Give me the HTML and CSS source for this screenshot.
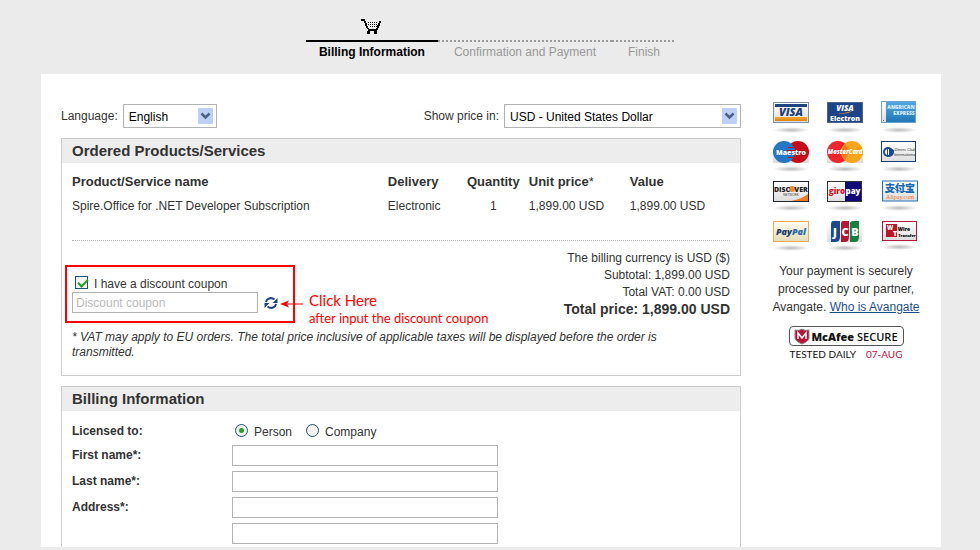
FILE: index.html
```html
<!DOCTYPE html>
<html lang="en">
<head>
    <meta charset="UTF-8">
    <meta name="viewport" content="width=device-width, initial-scale=1.0">
    <title>Billing Information</title>
    <link rel="stylesheet" href="styles.css">
</head>
<body>
    <!-- Checkout Steps -->
    <ol class="steps">
        <li class="step active">
            <svg class="cart" viewBox="0 0 21 16" shape-rendering="crispEdges">
                <path d="M0 0h4v2h-4zM3 2h2v2h-2zM4 4h2v3h-2zM5 7h2v2h-2zM6 9h2v1h-2zM7 10h9v2h-9zM15 9h2v2h-2zM16 6h2v3h-2zM17 4h2v3h-2zM18 2h2v2h-2zM6 12h3v3h-3zM13 12h3v3h-3z"/>
                <path d="M7 3h1v1h-1zM9 3h1v1h-1zM11 3h1v1h-1zM13 3h1v1h-1zM15 3h1v1h-1zM7 5h1v1h-1zM9 5h1v1h-1zM11 5h1v1h-1zM13 5h1v1h-1zM15 5h1v1h-1zM9 7h1v1h-1zM11 7h1v1h-1zM13 7h1v1h-1zM15 7h1v1h-1z"/>
            </svg>
            <span>Billing Information</span>
        </li>
        <li class="step"><span>Confirmation and Payment</span></li>
        <li class="step"><span>Finish</span></li>
    </ol>

    <div class="page">
        <main class="main">
            <div class="toolbar">
                <div class="picker">
                    <label for="language">Language:</label>
                    <div class="select language">
                        <select id="language"><option>English</option></select>
                        <svg viewBox="0 0 15 16"><rect width="15" height="16" rx="1" fill="#bcd0fa"/><path d="M3.500 5.500l4 4 4-4" fill="none" stroke="#4a6185" stroke-width="2.500"/></svg>
                    </div>
                </div>
                <div class="picker">
                    <label for="currency">Show price in:</label>
                    <div class="select currency">
                        <select id="currency"><option>USD - United States Dollar</option></select>
                        <svg viewBox="0 0 15 16"><rect width="15" height="16" rx="1" fill="#bcd0fa"/><path d="M3.500 5.500l4 4 4-4" fill="none" stroke="#4a6185" stroke-width="2.500"/></svg>
                    </div>
                </div>
            </div>

            <!-- Order -->
            <section class="panel">
                <h2>Ordered Products/Services</h2>
                <div class="panel-body">
                    <table class="products">
                        <thead>
                            <tr>
                                <th class="col-name">Product/Service name</th>
                                <th class="col-delivery">Delivery</th>
                                <th class="col-quantity">Quantity</th>
                                <th class="col-price">Unit price<span class="star">*</span></th>
                                <th>Value</th>
                            </tr>
                        </thead>
                        <tbody>
                            <tr>
                                <td>Spire.Office for .NET Developer Subscription</td>
                                <td>Electronic</td>
                                <td class="col-quantity">1</td>
                                <td>1,899.00 USD</td>
                                <td>1,899.00 USD</td>
                            </tr>
                        </tbody>
                    </table>

                    <div class="summary">
                        <div class="coupon">
                            <label class="coupon-check"><input type="checkbox" checked> I have a discount coupon</label>
                            <div class="coupon-row">
                                <input class="field" type="text" placeholder="Discount coupon" aria-label="Discount coupon">
                                <button class="refresh" type="button" aria-label="Refresh">
                                    <svg viewBox="0 0 14 14"><g fill="none" stroke="#1d4580" stroke-width="2"><path d="M2 6c.5-3 4.500-5.500 8.500-2.500"/><path d="M12 8c-.5 3-4.500 5.500-8.500 2.500"/></g><path fill="#1d4580" d="M13.500 2v5H8.500zM.5 12V7H5.500z"/></svg>
                                </button>
                            </div>
                            <div class="callout-box"></div>
                            <div class="callout">
                                <svg class="arrow" viewBox="0 0 23 8"><path d="M6 4h17" stroke="#f00"/><path d="M0 4l9-3.500L7 4l2 3.500z" fill="#f00"/></svg>
                                <p><span class="callout-title">Click Here</span><br>after input the discount coupon</p>
                            </div>
                        </div>
                        <div class="totals">
                            <p>The billing currency is USD ($)</p>
                            <p>Subtotal: 1,899.00 USD</p>
                            <p>Total VAT: 0.00 USD</p>
                            <p class="total">Total price: 1,899.00 USD</p>
                        </div>
                    </div>

                    <p class="note">* VAT may apply to EU orders. The total price inclusive of applicable taxes will be displayed before the order is transmitted.</p>
                </div>
            </section>

            <!-- Billing Form -->
            <section class="panel billing">
                <h2>Billing Information</h2>
                <form class="form">
                    <div class="row licensed">
                        <span class="row-label">Licensed to:</span>
                        <div class="radios">
                            <label><input type="radio" name="licensed" checked><span>Person</span></label>
                            <label><input type="radio" name="licensed"><span>Company</span></label>
                        </div>
                    </div>
                    <div class="row">
                        <label class="row-label" for="first">First name*:</label>
                        <input class="field" id="first" type="text">
                    </div>
                    <div class="row">
                        <label class="row-label" for="last">Last name*:</label>
                        <input class="field" id="last" type="text">
                    </div>
                    <div class="row">
                        <label class="row-label" for="address">Address*:</label>
                        <input class="field" id="address" type="text">
                    </div>
                    <div class="row">
                        <span class="row-label"></span>
                        <input class="field" type="text" aria-label="Address line 2">
                    </div>
                </form>
            </section>
        </main>

        <!-- Payment Methods -->
        <aside class="side">
            <svg class="defs" width="0" height="0">
                <defs>
                    <radialGradient id="shade"><stop offset="0" stop-color="#bbb"/><stop offset="1" stop-color="#fff"/></radialGradient>
                    <linearGradient id="paper" x2="0" y2="1"><stop offset="0" stop-color="#fff"/><stop offset="1" stop-color="#ddd"/></linearGradient>
                    <linearGradient id="orange" x2="0" y2="1"><stop offset="0" stop-color="#f6a935"/><stop offset="1" stop-color="#dd8410"/></linearGradient>
                    <linearGradient id="sky" x2="0" y2="1"><stop offset="0" stop-color="#54a8e0"/><stop offset="1" stop-color="#2075b5"/></linearGradient>
                    <linearGradient id="cream" x2="0" y2="1"><stop offset="0" stop-color="#fffdf2"/><stop offset="1" stop-color="#e4dcb8"/></linearGradient>
                </defs>
            </svg>
            <div class="cards">
                <svg viewBox="0 0 38 39">
                    <ellipse cx="18" cy="28" rx="18" ry="3" fill="url(#shade)"/>
                    <rect x=".5" y=".5" width="35" height="20" fill="url(#paper)" stroke="#7e8ea5"/>
                    <path fill="#1e4482" d="M2 2h32v3H2z"/><path fill="url(#orange)" d="M2 15h32v4H2z"/>
                    <text class="logo italic" x="18" y="14" font-size="11" fill="#1b3f80">VISA</text>
                </svg>
                <svg viewBox="0 0 38 39">
                    <ellipse cx="18" cy="28" rx="18" ry="3" fill="url(#shade)"/>
                    <rect x=".5" y=".5" width="35" height="20" fill="#1d4488" stroke="#4b6595"/>
                    <path fill="#eb9d25" d="M10 12q9-1 15-3-3 3-15 3z"/>
                    <text class="logo italic" x="18" y="9" font-size="8" fill="#fff">VISA</text>
                    <text class="logo" x="18" y="19" font-size="7" fill="#fff">Electron</text>
                </svg>
                <svg viewBox="0 0 38 39">
                    <ellipse cx="18" cy="28" rx="18" ry="3" fill="url(#shade)"/>
                    <rect x=".5" y="-.5" width="34" height="21" fill="url(#sky)" stroke="#6fa5cc"/>
                    <path fill="url(#paper)" d="M1 0h4v20H1z"/><path fill="#3a6f98" d="M2 18h1v1H2z"/>
                    <text class="logo outline" x="20" y="7" font-size="5">AMERICAN</text>
                    <text class="logo outline" x="23" y="13" font-size="5">EXPRESS</text>
                </svg>
                <svg viewBox="0 0 38 39">
                    <ellipse cx="18" cy="28" rx="18" ry="3" fill="url(#shade)"/>
                    <path fill="url(#paper)" d="M0 0h36v22H0z"/>
                    <circle cx="25" cy="11" r="11" fill="#c40d19"/><circle cx="11" cy="11" r="11" fill="#2377c4"/>
                    <path fill="#c40d19" d="M15 6h6v1h-6zM14 9h8v1h-8zM14 13h8v1h-8zM15 16h6v1h-6z"/>
                    <text class="logo" x="18" y="14" font-size="7" fill="#fff">Maestro</text>
                </svg>
                <svg viewBox="0 0 38 39">
                    <ellipse cx="18" cy="28" rx="18" ry="3" fill="url(#shade)"/>
                    <path fill="url(#paper)" d="M0 0h36v22H0z"/>
                    <circle cx="11" cy="11" r="11" fill="#f0242b"/><circle cx="25" cy="11" r="11" fill="#f8a51b"/>
                    <path fill="#f07a20" d="M18 3q6 8 0 16-6-8 0-16z"/>
                    <text class="logo italic" x="18" y="13" font-size="6" fill="#fff">MasterCard</text>
                </svg>
                <svg viewBox="0 0 38 39">
                    <ellipse cx="18" cy="28" rx="18" ry="3" fill="url(#shade)"/>
                    <rect x=".5" y=".5" width="34" height="20" fill="url(#paper)" stroke="#1d3f86"/>
                    <circle cx="7" cy="11" r="5" fill="#174990"/><circle cx="7" cy="11" r="3" fill="#fff"/><path fill="#174990" d="M6 8h1v6H6zM8 7q6 1 5 4 0 4-5 5z"/>
                    <text class="small-logo italic" x="24" y="10" font-size="4">Diners Club</text>
                    <text class="small-logo italic" x="24" y="15" font-size="4">International</text>
                </svg>
                <svg viewBox="0 0 38 39">
                    <ellipse cx="18" cy="28" rx="18" ry="3" fill="url(#shade)"/>
                    <rect x=".5" y="1.500" width="35" height="20" fill="url(#paper)" stroke="#1f252b"/>
                    <path fill="#f07b21" d="M35 14v7H18q11-2 17-7z"/><circle cx="19" cy="9" r="3" fill="#f5862a"/>
                    <text class="logo" x="9" y="12" font-size="7" fill="#222">DISC</text>
                    <text class="logo" x="28" y="12" font-size="7" fill="#222">VER</text>
                    <text class="small-logo" x="18" y="16" font-size="3">NETWORK</text>
                </svg>
                <svg viewBox="0 0 38 39">
                    <ellipse cx="18" cy="28" rx="18" ry="3" fill="url(#shade)"/>
                    <rect x=".5" y="1.500" width="34" height="20" fill="url(#paper)" stroke="#333"/>
                    <path fill="#100978" d="M18 2h16v19H18z"/>
                    <text class="logo" x="10" y="14" font-size="8" fill="#d91126">giro</text>
                    <text class="logo" x="26" y="14" font-size="8" fill="#fff">pay</text>
                </svg>
                <svg viewBox="0 0 38 39">
                    <ellipse cx="18" cy="28" rx="18" ry="3" fill="url(#shade)"/>
                    <rect x="1.500" y="1" width="35" height="20" fill="url(#paper)" stroke="#2871b5"/>
                    <text class="logo cjk" x="19" y="12" font-size="10" fill="#1669b8">支付宝</text>
                    <path d="M4 12q7-1 9-4 3 5 19 3" fill="none" stroke="#1669b8"/>
                    <text class="serif" x="19" y="19" font-size="6" fill="#e87524">Alipay.com</text>
                </svg>
                <svg viewBox="0 0 38 39">
                    <ellipse cx="18" cy="29" rx="18" ry="3" fill="url(#shade)"/>
                    <rect x=".5" y="2.500" width="35" height="20" fill="url(#cream)" stroke="#f5a95a"/>
                    <text class="logo italic" x="18" y="16" font-size="9" fill="#1d3d70">Pay<tspan fill="#2a6ca8">Pal</tspan></text>
                </svg>
                <svg viewBox="0 0 38 39">
                    <ellipse cx="18" cy="29" rx="18" ry="3" fill="url(#shade)"/>
                    <path fill="url(#paper)" d="M0 2h35v21H0z"/>
                    <path fill="#174b91" d="M6 2h7v16q0 5-5 5H4V6q0-4 2-4z"/><path fill="#b61735" d="M16 2h6v16q0 5-4 5h-4V5q0-3 2-3z"/><path fill="#168040" d="M26 2h6v16q0 5-4 5h-5V5q0-3 3-3z"/>
                    <text class="logo" x="8" y="17" font-size="11" fill="#fff">J</text>
                    <text class="logo" x="18" y="17" font-size="11" fill="#fff">C</text>
                    <text class="logo" x="28" y="17" font-size="11" fill="#fff">B</text>
                </svg>
                <svg viewBox="0 0 38 39">
                    <ellipse cx="18" cy="28" rx="18" ry="3" fill="url(#shade)"/>
                    <rect x="1.500" y="2.500" width="34" height="19" fill="url(#paper)" stroke="#b21b3a"/>
                    <path fill="#bd1727" d="M5 5h11v13H5z"/>
                    <text class="logo" x="9" y="11" font-size="6" fill="#fff">W</text>
                    <text class="logo" x="14" y="17" font-size="7" fill="#fff">T</text>
                    <text class="logo" x="23" y="12" font-size="5">Wire</text>
                    <text class="logo" x="26" y="18" font-size="4">Transfer</text>
                </svg>
            </div>
            <p class="secure">Your payment is securely processed by our partner, Avangate. <a href="#">Who is Avangate</a></p>
            <div class="mcafee">
                <div class="mcafee-badge">
                    <svg viewBox="0 0 16 17"><path fill="#bb1238" stroke="#888" d="M1 2q4 1 7-1 3 2 7 1v8q0 3-7 6-7-3-7-6z"/><path fill="none" stroke="#fff" stroke-width="1.500" d="M4 11V5l4 5 4-5v6"/></svg>
                    <span><b>McAfee</b> SECURE</span>
                </div>
                <div class="mcafee-date"><span>TESTED DAILY</span><span class="date">07-AUG</span></div>
            </div>
        </aside>
    </div>
</body>
</html>
```

FILE: styles.css
```css
/* Basic Reset */
* {
    margin: 0;
    padding: 0;
    box-sizing: border-box;
}

body {
    font-family: "Liberation Sans", Arial, sans-serif;
    font-size: 12px;
    line-height: 17px;
    color: #333;
    background: #ebebeb;
    padding: 0 39px 3px 41px;
}

svg {
    display: block;
    flex: none;
}

input, select, button {
    font: inherit;
}

/* Checkout Steps */
.steps {
    display: flex;
    justify-content: center;
    list-style: none;
    height: 74px;
    padding-top: 19px;
}

.step {
    display: flex;
    flex-direction: column;
    justify-content: flex-end;
    align-items: center;
    height: 43px;
    color: #999;
}

.step span {
    padding: 4px 16px 0;
    height: 22px;
    background: repeating-linear-gradient(90deg, #999 0 2px, transparent 2px 4px) top / 100% 2px no-repeat;
}

.step.active {
    color: #000;
    font-weight: bold;
}

.step.active span {
    padding: 4px 13px 0;
    background: linear-gradient(#000, #000) top / 100% 2px no-repeat;
}

.cart {
    width: 21px;
    height: 16px;
    margin-bottom: 5px;
}

/* Page */
.page {
    display: flex;
    max-width: 900px;
    margin: 0 auto;
    padding: 30px 10px 0 20px;
    background: #fff;
}

.main {
    flex: 1;
    min-width: 0;
}

.toolbar, .picker {
    display: flex;
    align-items: center;
}

.toolbar {
    justify-content: space-between;
    margin-bottom: 10px;
}

.picker {
    gap: 5px;
    line-height: 24px;
}

.select {
    position: relative;
}

.select svg {
    position: absolute;
    top: 4px;
    right: 4px;
    width: 15px;
    height: 16px;
    pointer-events: none;
}

.select select {
    display: block;
    appearance: none;
    width: 100%;
    height: 24px;
    padding: 0 5px;
    border: 1px solid #b3b3b3;
    border-radius: 0;
    background: #fff;
    color: #000;
}

.language {
    width: 94px;
}

.currency {
    width: 237px;
}

/* Panels */
.panel {
    border: 1px solid #ccc;
    margin-bottom: 10px;
}

.panel h2 {
    height: 24px;
    padding: 0 10px;
    background: #ededed;
    font-size: 15px;
    line-height: 24px;
}

.panel-body {
    padding: 6px 10px 15px;
}

.products {
    width: 100%;
    table-layout: fixed;
    border-collapse: collapse;
    text-align: left;
    line-height: 25px;
}

.products th {
    font-size: 13px;
}

.products .star {
    font-weight: normal;
}

.products .col-name {
    width: 48%;
}

.products .col-delivery {
    width: 12%;
}

.products .col-quantity {
    width: 62px;
    padding-right: 9px;
    text-align: center;
}

.products .col-price {
    width: 101px;
}

.summary {
    display: flex;
    justify-content: space-between;
    margin-top: 21px;
    padding-top: 9px;
    border-top: 1px dotted #bbb;
}

.totals {
    text-align: right;
}

.total {
    font-size: 14px;
    font-weight: bold;
}

.note {
    margin-top: 12px;
    padding-right: 40px;
    font-style: italic;
    line-height: 15px;
}

/* Coupon */
.coupon {
    position: relative;
    padding-top: 26px;
}

.coupon-check {
    display: flex;
    align-items: flex-start;
    gap: 6px;
    height: 16px;
    padding-left: 3px;
}

.coupon-row {
    display: flex;
    align-items: center;
    gap: 6px;
}

.field {
    height: 21px;
    padding: 0 3px;
    border: 1px solid #b3b3b3;
    background: #fff;
    color: #333;
}

.field::placeholder {
    color: #bbb;
}

.coupon .field {
    width: 186px;
}

.refresh {
    width: 14px;
    height: 14px;
    border: none;
    background: none;
    cursor: pointer;
}

input[type="checkbox"] {
    appearance: none;
    width: 13px;
    height: 13px;
    border: 1px solid #1c5180;
    background: #f3f3ef;
}

input[type="checkbox"]:checked::after {
    content: "";
    display: block;
    width: 8px;
    height: 4px;
    margin: 2px 0 0 2px;
    border: solid #21a121;
    border-width: 0 0 2px 2px;
    transform: rotate(-45deg);
}

/* Red Callout */
.callout-box {
    position: absolute;
    top: 15px;
    left: -7px;
    width: 230px;
    height: 58px;
    border: 2px solid #f00;
    pointer-events: none;
}

.callout {
    position: absolute;
    top: 42px;
    left: 208px;
    display: flex;
    gap: 6px;
    color: #f00;
    font-family: Lato, sans-serif;
    font-size: 13px;
    white-space: nowrap;
}

.callout-title {
    font-size: 15px;
}

.arrow {
    width: 23px;
    height: 8px;
    margin-top: 8px;
}

/* Billing Form */
.billing {
    border-bottom: none;
    margin-bottom: 0;
}

.form {
    display: flex;
    flex-direction: column;
    gap: 5px;
    padding: 12px 10px 3px;
}

.row {
    display: flex;
    align-items: center;
}

.licensed {
    height: 17px;
}

.row-label {
    width: 160px;
    font-weight: bold;
}

.row .field {
    width: 266px;
}

.radios, .radios label {
    display: flex;
}

.radios {
    gap: 14px;
    padding-left: 3px;
}

.radios label {
    gap: 6px;
}

.radios span {
    padding-top: 2px;
}

input[type="radio"] {
    appearance: none;
    width: 13px;
    height: 13px;
    margin-top: 2px;
    border: 1px solid #1c5180;
    border-radius: 50%;
    background: #f3f3ef;
}

input[type="radio"]:checked {
    background: radial-gradient(circle, #21a121 0 2px, #f3f3ef 3px);
}

/* Payment Methods */
.side {
    width: 170px;
    margin-left: 20px;
    text-align: center;
}

.defs {
    position: absolute;
}

.cards {
    display: grid;
    grid-template-columns: repeat(3, 38px);
    column-gap: 16px;
    justify-content: center;
    margin-top: -2px;
}

.cards svg {
    width: 38px;
    height: 39px;
    overflow: visible;
}

.logo {
    font-family: "Open Sans", sans-serif;
    font-weight: 800;
    text-anchor: middle;
}

.small-logo {
    font-family: "Liberation Sans", sans-serif;
    text-anchor: middle;
    fill: #333;
}

.italic {
    font-style: italic;
}

.outline {
    fill: #d9efff;
}

.cjk {
    font-family: "Noto Sans CJK SC", sans-serif;
}

.serif {
    font-family: "Liberation Serif", serif;
    text-anchor: middle;
}

.secure {
    padding: 4px 5px 0;
    line-height: 18px;
}

.secure a {
    color: #1d4f8f;
}

.mcafee {
    display: flex;
    flex-direction: column;
    align-items: center;
    margin-top: 10px;
    color: #111;
}

.mcafee-badge {
    display: flex;
    align-items: center;
    justify-content: center;
    gap: 1px;
    width: 115px;
    height: 20px;
    border: 1px solid #555;
    border-radius: 4px;
    font-family: "Open Sans", sans-serif;
    font-size: 11px;
    font-weight: 600;
}

.mcafee-badge b {
    font-weight: 800;
}

.mcafee-badge svg {
    width: 16px;
    height: 17px;
}

.mcafee-date {
    display: flex;
    gap: 10px;
    font-family: Lato, sans-serif;
    font-size: 10px;
    line-height: 16px;
}

.date {
    color: #b8123a;
}
```
